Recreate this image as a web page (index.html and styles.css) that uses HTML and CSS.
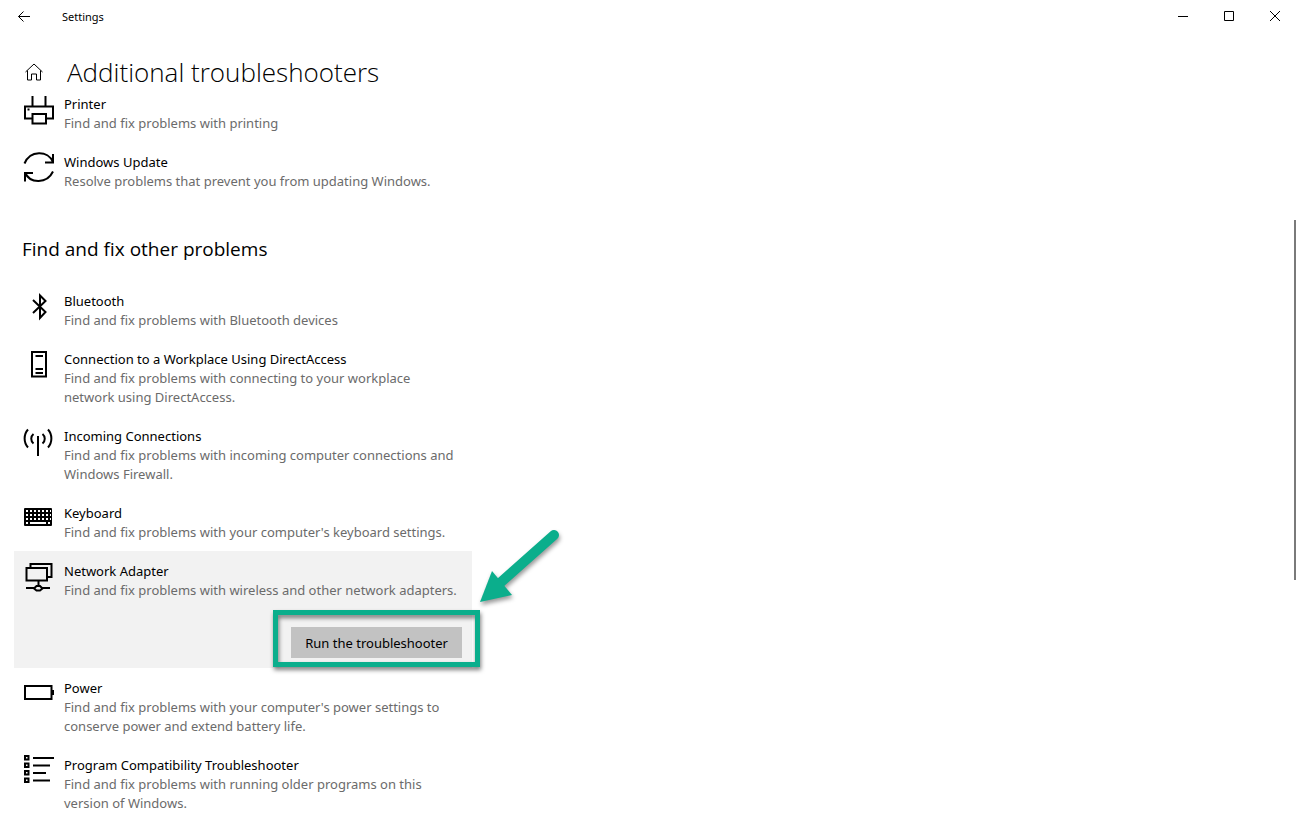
FILE: index.html
```html
<!DOCTYPE html>
<html lang="en">
<head>
<meta charset="utf-8">
<meta name="viewport" content="width=device-width, initial-scale=1">
<title>Settings</title>
<link rel="stylesheet" href="styles.css">
</head>
<body>
<header class="titlebar">
  <button class="back" type="button" aria-label="Back"><svg width="14" height="12" viewBox="0 0 14 12"><path d="M13 5.500H1.500M6.500 .5l-5 5 5 5"/></svg></button>
  <span class="app-name">Settings</span>
  <div class="window-controls">
    <button type="button" aria-label="Minimize"><svg width="12" height="12" viewBox="0 0 12 12"><path d="M1 5.500h10"/></svg></button>
    <button type="button" aria-label="Maximize"><svg width="12" height="12" viewBox="0 0 12 12"><path d="M1.500 .5h9v9h-9z"/></svg></button>
    <button type="button" aria-label="Close"><svg width="12" height="12" viewBox="0 0 12 12"><path d="M1 0l10 10M11 0L1 10"/></svg></button>
  </div>
</header>
<div class="page-head">
  <a class="home" href="#" aria-label="Home"><svg width="20" height="20" viewBox="0 0 20 20"><path d="M1.500 10L10 2l8.500 8M3.500 8.500v9.500h4v-6h5v6h4V8.500"/></svg></a>
  <h1>Additional troubleshooters</h1>
</div>
<main class="content">
  <ul class="list">
    <li class="item">
      <svg class="icon" viewBox="0 0 32 32"><path d="M10.500 2v10M23.500 2v10M10 24.500H3v-12h28v12h-7M10.500 20h13.500v9.500H10.500z"/><path class="fill" d="M5.500 14.500h2v2h-2z"/></svg>
      <div class="text"><h3>Printer</h3><p>Find and fix problems with printing</p></div>
    </li>
    <li class="item">
      <svg class="icon" viewBox="0 0 32 32"><path d="M2.500 11.500C8-2 26-2 31 10M31 2v8.500h-8M31 19.500C25 32 8 32 3 20.500M3 29.500v-8.500H11"/></svg>
      <div class="text"><h3>Windows Update</h3><p>Resolve problems that prevent you from updating Windows.</p></div>
    </li>
  </ul>
  <h2>Find and fix other problems</h2>
  <ul class="list">
    <li class="item">
      <svg class="icon" viewBox="0 0 32 32"><path d="M11 9l12.500 12-5.500 6V4.500l5.500 5.500L11 22"/></svg>
      <div class="text"><h3>Bluetooth</h3><p>Find and fix problems with Bluetooth devices</p></div>
    </li>
    <li class="item">
      <svg class="icon" viewBox="0 0 32 32"><path d="M10 3h14v24.500H10zM13.500 7h7.500M13.500 20h7.500M13.500 24h7.500"/></svg>
      <div class="text"><h3>Connection to a Workplace Using DirectAccess</h3><p>Find and fix problems with connecting to your workplace network using DirectAccess.</p></div>
    </li>
    <li class="item">
      <svg class="icon" viewBox="0 0 32 32"><path d="M16 10v20M11.500 8c-3 2.500-3 7 0 9.500M20.500 8c3 2.500 3 7 0 9.500M6 3.500c-4.500 5-4.500 13 0 18M26 3.500c4.500 5 4.500 13 0 18"/></svg>
      <div class="text"><h3>Incoming Connections</h3><p>Find and fix problems with incoming computer connections and Windows Firewall.</p></div>
    </li>
    <li class="item">
      <svg class="icon" viewBox="0 0 32 32"><rect class="fill" x="2" y="5" width="28" height="18" rx="1"/><path class="keys" d="M4 8h25M4 12h25M4 16h25"/><path class="slot" d="M4 20h2M8 20h16M26 20h2"/></svg>
      <div class="text"><h3>Keyboard</h3><p>Find and fix problems with your computer's keyboard settings.</p></div>
    </li>
    <li class="item selected">
      <svg class="icon" viewBox="0 0 32 32"><path d="M4.500 7h20.500v12.500H4.500zM8.500 7V3h21v13H25M16.500 20v5M4 27h8M20 27h8"/><path d="M12 27.500l2.500-2.500h3.500l2.500 2.500-2.500 2h-3.500z"/></svg>
      <div class="text"><h3>Network Adapter</h3><p>Find and fix problems with wireless and other network adapters.</p></div>
      <div class="action"><button class="run" type="button">Run the troubleshooter</button><span class="frame"></span></div>
      <svg class="arrow" width="96" height="88" viewBox="0 0 96 88"><path class="shaft" d="M82 13L28 61"/><path class="head" d="M8 80L20 49l20 24z"/></svg>
    </li>
    <li class="item">
      <svg class="icon" viewBox="0 0 32 32"><path d="M3 8h26.500v13H3z"/><path class="fill" d="M30 12h2v5h-2z"/></svg>
      <div class="text"><h3>Power</h3><p>Find and fix problems with your computer's power settings to conserve power and extend battery life.</p></div>
    </li>
    <li class="item">
      <svg class="icon" viewBox="0 0 32 32"><path d="M3 1h3.500v3.500H3zM3 8.500h3.500V12H3zM3 16h3.500v3.500H3zM3 23.500h3.500V27H3zM11 3h21M11 10.500h17M11 18h13M11 25.500h17"/></svg>
      <div class="text"><h3>Program Compatibility Troubleshooter</h3><p>Find and fix problems with running older programs on this version of Windows.</p></div>
    </li>
  </ul>
</main>
<div class="scroll-thumb"></div>
</body>
</html>
```
FILE: styles.css
```css
* { box-sizing: border-box; }

body {
  margin: 0;
  min-height: 100vh;
  overflow: hidden;
  background: #fff;
  color: #000;
  font: 13px/20px "Noto Sans", "Open Sans", sans-serif;
}

h1, h2, h3, p, ul { margin: 0; padding: 0; font-weight: 400; }
ul { list-style: none; }
button { border: 0; padding: 0; background: none; color: inherit; font: inherit; }
svg { display: block; fill: none; stroke: #000; }

.titlebar { display: flex; align-items: center; height: 33px; }
.back { display: grid; place-items: center; width: 48px; height: 32px; }
.app-name { margin-left: 14px; font-size: 11px; }
.window-controls { display: flex; margin-left: auto; }
.window-controls button { display: grid; place-items: center; width: 46px; height: 32px; }

.page-head { display: flex; align-items: center; gap: 23px; height: 51px; padding: 27px 0 0 24px; }
.page-head h1 { font-family: "Open Sans", "Noto Sans", sans-serif; font-size: 26px; font-weight: 350; line-height: 24px; }

.content { padding-left: 14px; }
.content h2 { margin: 35px 0 18px 8px; font-family: "Open Sans", "Noto Sans", sans-serif; font-size: 19px; line-height: 28px; }
.list { max-width: 458px; }

.item {
  position: relative;
  display: grid;
  grid-template-columns: 32px 1fr;
  column-gap: 10px;
  padding: 10px 10px 9px 8px;
}
.icon { width: 32px; height: 32px; stroke-width: 2; overflow: visible; }
.icon .fill { fill: #000; stroke: none; }
.icon .keys { stroke: #fff; stroke-dasharray: 2 2; stroke-width: 2; }
.icon .slot { stroke: #fff; stroke-width: 2; }
.item h3 { font-size: 13px; line-height: 20px; }
.item p { color: #6b6b6b; font-size: 13px; line-height: 19px; }

.selected { padding-bottom: 10px; background: #f2f2f2; }
.action { grid-column: 2; position: relative; justify-self: end; margin-top: 27px; }
.run { display: block; height: 31px; padding: 0 14px; background: #c2c2c2; color: #000; }
.frame {
  position: absolute;
  inset: -17px -18px -9px;
  border: 5px solid #0bae8c;
  filter: drop-shadow(1px 3px 2px rgba(0, 0, 0, 0.5));
  pointer-events: none;
}
.arrow { position: absolute; left: 458px; top: -29px; filter: drop-shadow(1px 3px 2px rgba(0, 0, 0, 0.4)); }
.arrow .shaft { stroke: #0bae8c; stroke-width: 10; stroke-linecap: round; }
.arrow .head { fill: #0bae8c; stroke: none; }

.scroll-thumb { position: fixed; top: 220px; right: 2px; width: 2px; height: 360px; background: #7a7a7a; }
```
